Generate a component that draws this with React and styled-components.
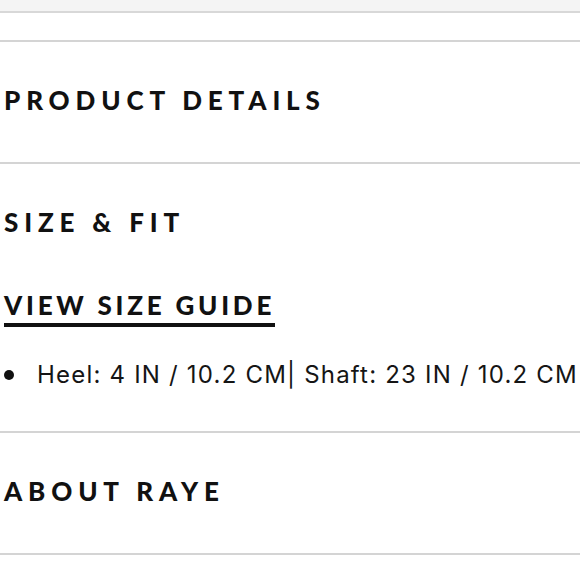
import React from 'react'
import { styled, createGlobalStyle } from 'styled-components'

const GlobalStyle = createGlobalStyle`
  body {
    margin: 0;
    background: #fff;
    font-family: 'Lato', 'Liberation Sans', sans-serif;
    color: #111;
  }
`

const sizes = [
  'Heel: 4 IN / 10.2 CM| Shaft: 23 IN / 10.2 CM',
]

export default function App() {
  return (
    <>
      <GlobalStyle />
      <Page>
        <TopBand />
        <Spacer />
        <Section>
          <Heading>Product Details</Heading>
        </Section>
        <Section $bottom={42}>
          <Heading>Size &amp; Fit</Heading>
          <GuideLink href="#">View Size Guide</GuideLink>
          <List>
            {sizes.map((s) => (
              <Item key={s}>
                <Dot />
                <span>{s}</span>
              </Item>
            ))}
          </List>
        </Section>
        <Section>
          <Heading>About Raye</Heading>
        </Section>
      </Page>
    </>
  )
}

const Page = styled.div`
  width: 580px;
  height: 580px;
  overflow: hidden;
`

const TopBand = styled.div`
  height: 11px;
  background: #f4f4f4;
  border-bottom: 2px solid #d8d8d8;
`

const Spacer = styled.div`
  height: 27px;
  border-bottom: 2px solid #d4d4d4;
`

const Section = styled.section`
  display: flex;
  flex-direction: column;
  align-items: flex-start;
  padding: 45px 4px ${(p) => p.$bottom ?? 49}px;
  border-bottom: 2px solid #d4d4d4;
`

const Heading = styled.h2`
  margin: 0;
  font-size: 26px;
  line-height: 26px;
  font-weight: 900;
  letter-spacing: 0.225em;
  text-transform: uppercase;
`

const GuideLink = styled.a`
  display: inline-block;
  margin-top: 57px;
  padding-bottom: 5px;
  border-bottom: 4px solid #111;
  color: #111;
  text-decoration: none;
  font-size: 26px;
  line-height: 26px;
  font-weight: 900;
  letter-spacing: 0.145em;
  text-transform: uppercase;
`

const List = styled.ul`
  margin: 34px 0 0;
  padding: 0;
  list-style: none;
`

const Item = styled.li`
  display: flex;
  align-items: center;
  gap: 23px;
  font-family: 'Inter', 'Liberation Sans', sans-serif;
  font-size: 24px;
  line-height: 28px;
  letter-spacing: 1.2px;
  white-space: nowrap;
  color: #151515;
`

const Dot = styled.span`
  width: 10px;
  height: 10px;
  border-radius: 50%;
  background: #111;
  flex: none;
`
